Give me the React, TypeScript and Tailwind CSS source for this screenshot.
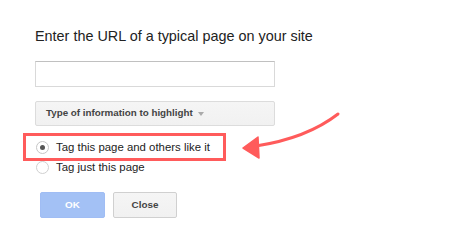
import React from "react";

export default function App() {
  return (
    <div
      className="relative w-[452px] h-[243px] bg-white overflow-hidden"
      style={{ fontFamily: '"Liberation Sans", Arial, sans-serif' }}
    >
      <div className="flex flex-col pl-[35px] pt-[26px]">
        <div className="text-[14.4px] leading-[20px] text-[#222] whitespace-nowrap">
          Enter the URL of a typical page on your site
        </div>
        <div className="mt-[15px] w-[240px] h-[26px] border border-[#d9d9d9] border-t-[#c0c0c0] bg-white" />
        <div className="mt-[14px] w-[240px] h-[25px] border border-[#dcdcdc] rounded-[2px] bg-gradient-to-b from-[#f5f5f5] to-[#f1f1f1] flex items-center pl-[10px] gap-[5px]">
          <span className="text-[9.8px] font-bold text-[#444] whitespace-nowrap">Type of information to highlight</span>
          <span className="w-0 h-0 border-l-[3.5px] border-r-[3.5px] border-t-[4px] border-l-transparent border-r-transparent border-t-[#aaa] mt-[1px]" />
        </div>
        <div className="mt-[7px] -ml-[12px] w-[203px] h-[28px] border-[3px] border-[#ff5b5b] flex items-center pl-[10px] gap-[7px]">
          <span className="w-[13px] h-[13px] shrink-0 rounded-full border border-[#c6c6c6] bg-white flex items-center justify-center">
            <span className="w-[5px] h-[5px] rounded-full bg-[#555]" />
          </span>
          <span className="text-[11.4px] leading-[16px] text-[#222] whitespace-nowrap">Tag this page and others like it</span>
        </div>
        <div className="-mt-[2px] h-[16px] flex items-center pl-[1px] gap-[7px]">
          <span className="w-[13px] h-[13px] shrink-0 rounded-full border border-[#d0d0d0] bg-white" />
          <span className="text-[11.4px] leading-[16px] text-[#222] whitespace-nowrap">Tag just this page</span>
        </div>
        <div className="mt-[17px] flex gap-[8px] pl-[5px]">
          <div className="w-[65px] h-[26px] rounded-[2px] border border-[#a0bdf4] bg-[#a3c1f5] flex items-center justify-center text-[9.9px] font-bold text-white">
            OK
          </div>
          <div className="w-[64px] h-[26px] rounded-[2px] border border-[#d0d0d0] bg-gradient-to-b from-[#f5f5f5] to-[#f1f1f1] flex items-center justify-center text-[9.9px] font-bold text-[#444]">
            Close
          </div>
        </div>
      </div>
      <svg className="absolute left-0 top-0" width="452" height="243" viewBox="0 0 452 243">
        <path
          d="M338 114 C 320 128, 295 140, 256 146"
          fill="none"
          stroke="#ff5b5b"
          strokeWidth="3"
          strokeLinecap="round"
        />
        <path d="M243 148 L258 137 L259 158 Z" fill="#ff5b5b" stroke="#ff5b5b" strokeWidth="1.5" strokeLinejoin="round" />
      </svg>
    </div>
  );
}
